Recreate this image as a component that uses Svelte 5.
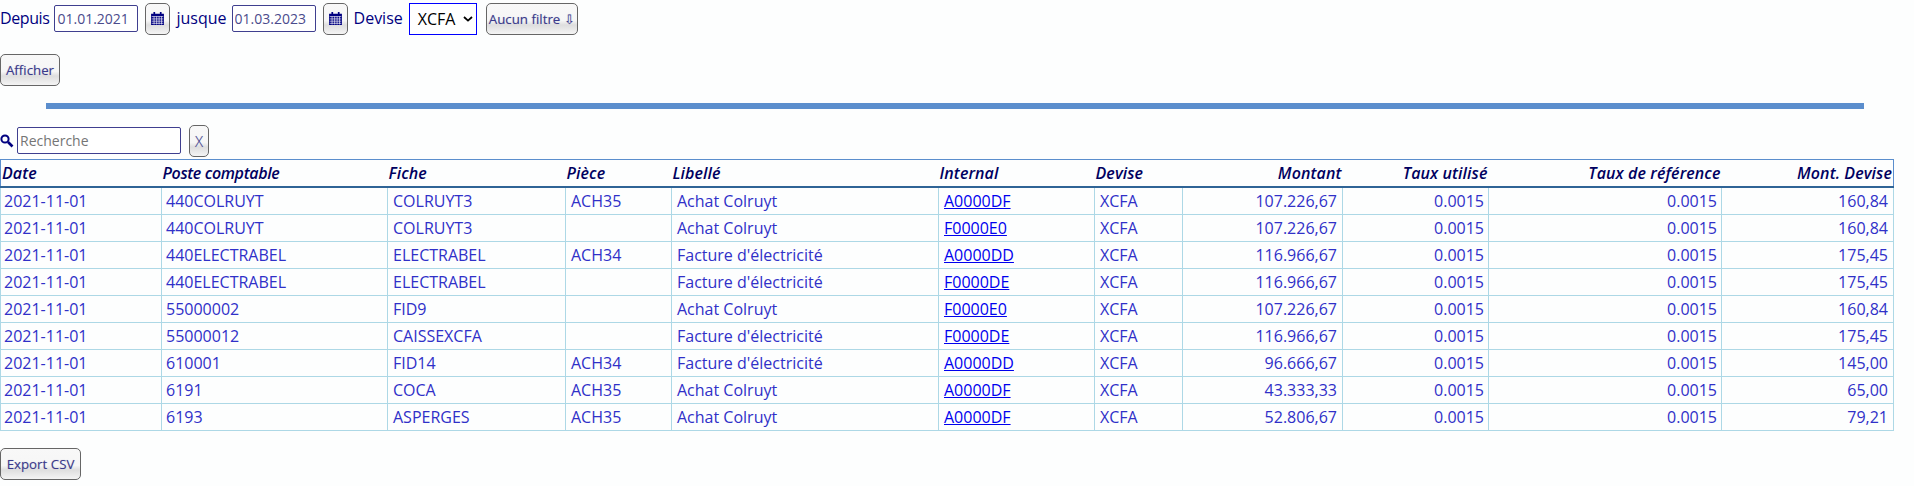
<script>
  const columns = [
    { label: 'Date', width: 161 },
    { label: 'Poste comptable', width: 226 },
    { label: 'Fiche', width: 178 },
    { label: 'Pièce', width: 106 },
    { label: 'Libellé', width: 267 },
    { label: 'Internal', width: 156 },
    { label: 'Devise', width: 88 },
    { label: 'Montant', width: 160, right: true },
    { label: 'Taux utilisé', width: 146, right: true },
    { label: 'Taux de référence', width: 233, right: true },
    { label: 'Mont. Devise', width: 172, right: true }
  ]

  const rows = [
    ['440COLRUYT', 'COLRUYT3', 'ACH35', 'Achat Colruyt', 'A0000DF', '107.226,67', '160,84'],
    ['440COLRUYT', 'COLRUYT3', '', 'Achat Colruyt', 'F0000E0', '107.226,67', '160,84'],
    ['440ELECTRABEL', 'ELECTRABEL', 'ACH34', "Facture d'électricité", 'A0000DD', '116.966,67', '175,45'],
    ['440ELECTRABEL', 'ELECTRABEL', '', "Facture d'électricité", 'F0000DE', '116.966,67', '175,45'],
    ['55000002', 'FID9', '', 'Achat Colruyt', 'F0000E0', '107.226,67', '160,84'],
    ['55000012', 'CAISSEXCFA', '', "Facture d'électricité", 'F0000DE', '116.966,67', '175,45'],
    ['610001', 'FID14', 'ACH34', "Facture d'électricité", 'A0000DD', '96.666,67', '145,00'],
    ['6191', 'COCA', 'ACH35', 'Achat Colruyt', 'A0000DF', '43.333,33', '65,00'],
    ['6193', 'ASPERGES', 'ACH35', 'Achat Colruyt', 'A0000DF', '52.806,67', '79,21']
  ]
</script>

{#snippet calendar()}
  <svg class="cal" viewBox="0 0 14 14" width="15" height="15" aria-hidden="true">
    <path fill="#000080" d="M1 2.5h2.2V1h1.6v1.5h4.4V1h1.6v1.5H13V13H1z" />
    <path stroke="#fff" stroke-width="0.6" fill="none" d="M1.6 5.2h10.8M1.6 7.4h10.8M1.6 9.5h10.8M1.6 11.5h10.8M3.8 5v7.6M6.2 5v7.6M8.5 5v7.6M10.8 5v7.6" />
  </svg>
{/snippet}

<main>
  <form class="filters">
    <label for="from" class="first">Depuis</label>
    <input id="from" class="date" value="01.01.2021" />
    <button type="button" class="btn icon">{@render calendar()}</button>
    <label for="to">jusque</label>
    <input id="to" class="date" value="01.03.2023" />
    <button type="button" class="btn icon">{@render calendar()}</button>
    <label for="cur">Devise</label>
    <div class="select" id="cur">
      <span>XCFA</span>
      <svg viewBox="0 0 10 6" width="10" height="6" aria-hidden="true"><path d="M1 1l4 3.6L9 1" fill="none" stroke="#000" stroke-width="1.8" /></svg>
    </div>
    <button type="button" class="btn filter">Aucun filtre ⇩</button>
  </form>

  <div class="show"><button type="button" class="btn">Afficher</button></div>

  <hr />

  <div class="search">
    <svg viewBox="0 0 14 14" width="14" height="14" aria-hidden="true">
      <circle cx="5" cy="5" r="3.6" fill="none" stroke="#000080" stroke-width="2" />
      <path d="M8 8l4.5 4.5" stroke="#000080" stroke-width="2.6" />
    </svg>
    <input class="query" placeholder="Recherche" />
    <button type="button" class="btn clear">X</button>
  </div>

  <table>
    <colgroup>
      {#each columns as col}
        <col style="width: {col.width}px" />
      {/each}
    </colgroup>
    <thead>
      <tr>
        {#each columns as col}
          <th class:right={col.right}>{col.label}</th>
        {/each}
      </tr>
    </thead>
    <tbody>
      {#each rows as row}
        <tr>
          <td>2021-11-01</td>
          <td>{row[0]}</td>
          <td>{row[1]}</td>
          <td>{row[2]}</td>
          <td>{row[3]}</td>
          <td><a href="#top">{row[4]}</a></td>
          <td>XCFA</td>
          <td class="right">{row[5]}</td>
          <td class="right">0.0015</td>
          <td class="right">0.0015</td>
          <td class="right">{row[6]}</td>
        </tr>
      {/each}
    </tbody>
  </table>

  <button type="button" class="btn export">Export CSV</button>
</main>

<style>
  :global(body) {
    margin: 0;
    background: #fdfefe;
  }

  main {
    font-family: 'Open Sans', sans-serif;
    font-size: 16px;
    color: #000080;
    height: 486px;
    overflow: hidden;
  }

  .filters {
    display: flex;
    align-items: center;
    height: 37px;
  }

  .filters label {
    line-height: 37px;
  }

  .first {
    letter-spacing: -0.4px;
  }

  input {
    font: inherit;
    box-sizing: border-box;
    color: #4b4b8c;
    background: #fff;
    border: 1px solid #3f3f8f;
    border-radius: 2px;
    padding: 0 2px;
  }

  .date {
    width: 84px;
    height: 27px;
    font-size: 14px;
    margin-left: 5px;
  }

  .btn {
    font-family: inherit;
    font-size: 13.3px;
    color: #3a3a8c;
    text-shadow: 0 0 1px #b0b0c8;
    border: 1px solid #666;
    border-radius: 5px;
    padding: 0 5px;
    background: linear-gradient(to bottom, #f8f8f8 0%, #f6f6f6 55%, #dedede 70%, #f4f4f4 100%);
  }

  .icon {
    width: 25px;
    height: 32px;
    padding: 0;
    margin: 0 6px 0 7px;
    display: flex;
    align-items: center;
    justify-content: center;
  }

  .select {
    box-sizing: border-box;
    display: flex;
    align-items: center;
    gap: 8px;
    width: 68px;
    height: 32px;
    margin-left: 6px;
    padding-left: 8px;
    border: 1px solid #0000ff;
    background: #fff;
    color: #000;
  }

  .filter {
    width: 92px;
    height: 32px;
    padding: 0;
    margin-left: 9px;
    white-space: nowrap;
  }

  .show {
    padding-top: 17px;
  }

  .show .btn {
    display: block;
    height: 32px;
    width: 60px;
    padding: 0;
  }

  hr {
    width: 1818px;
    height: 6px;
    margin: 17px 0 0 46px;
    border: 0;
    background: #5b8ecd;
  }

  .search {
    display: flex;
    align-items: center;
    height: 33px;
    margin-top: 15px;
    margin-bottom: 2px;
  }

  .query {
    width: 164px;
    height: 27px;
    font-size: 14px;
    margin-left: 3px;
  }

  .clear {
    width: 20px;
    height: 32px;
    padding: 0;
    margin-left: 8px;
    font-size: 15px;
    font-weight: 300;
  }

  table {
    border-collapse: collapse;
    table-layout: fixed;
    width: 1893px;
    border: 1px solid #5b8ecd;
  }

  th {
    font-style: italic;
    font-weight: 600;
    letter-spacing: 0.1px;
    text-align: left;
    height: 26px;
    padding: 0 1px;
    border-bottom: 2px solid #2f6496;
    color: #000060;
  }

  th:nth-child(2) {
    letter-spacing: -0.35px;
  }

  td {
    height: 26px;
    padding: 0 4px 0 5px;
    color: #3030c8;
    border: 1px solid #add8e6;
    white-space: nowrap;
  }

  td:first-child {
    padding-left: 3px;
  }

  td:nth-child(2) {
    padding-left: 4px;
  }

  td:nth-child(8),
  td:nth-child(11) {
    padding-right: 5px;
  }

  a {
    color: #0000ee;
  }

  th.right,
  td.right {
    text-align: right;
  }

  .export {
    display: block;
    width: 81px;
    height: 32px;
    margin-top: 17px;
    padding: 0;
  }
</style>
